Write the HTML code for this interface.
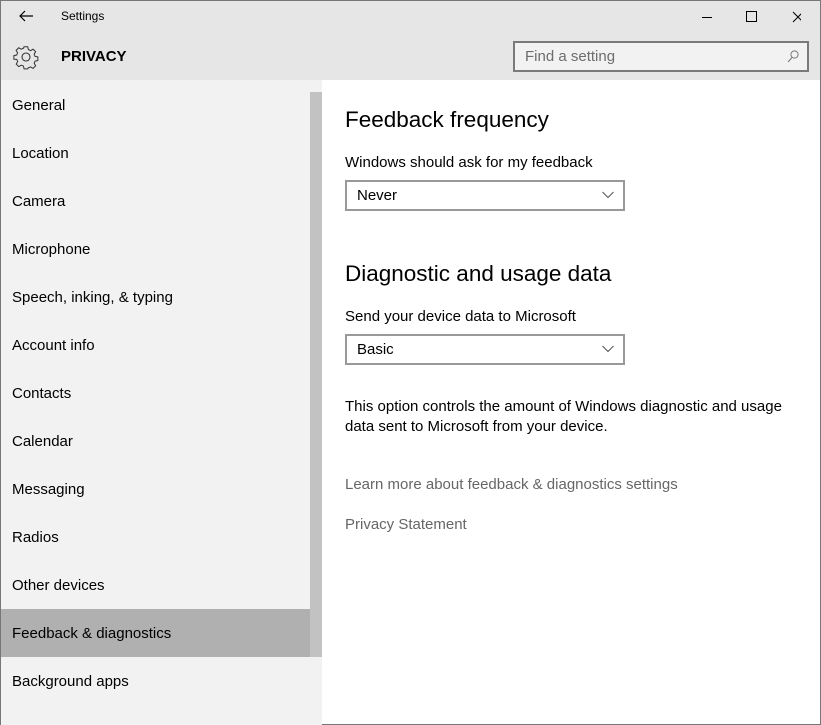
<!DOCTYPE html><html><head><style>
*{margin:0;padding:0;box-sizing:border-box}
body{width:821px;height:725px;overflow:hidden;font-family:"Liberation Sans",sans-serif;background:#fff;position:relative}
.win{position:absolute;left:0;top:0;width:821px;height:725px;border:1px solid #777;}
.hdr{position:absolute;left:0;top:0;width:819px;height:79px;background:#e6e6e6}
.t{position:absolute;font-size:12px;color:#000}
.side{position:absolute;left:0;top:79px;width:321px;height:645px;background:#f2f2f2}
.it{position:absolute;left:0;width:309px;height:48px;line-height:50px;padding-left:11px;font-size:15px;color:#000}
.sel{background:#b0b0b0}
.sb{position:absolute;left:309px;top:12px;width:12px;height:565px;background:#c2c2c2}
.c{position:absolute;color:#000}
.dd{position:absolute;left:344px;width:280px;height:31px;border:2px solid #999;font-size:15px;line-height:27px;padding-left:10px}
.dd svg{position:absolute;right:9px;top:9px}
</style></head><body><div class="win">
<div class="hdr">
<svg style="position:absolute;left:17px;top:8px" width="16" height="14" viewBox="0 0 16 14"><path d="M15 7H2M7 2L2 7l5 5" fill="none" stroke="#000" stroke-width="1.2"/></svg>
<div class="t" style="left:60px;top:8px">Settings</div>
<svg style="position:absolute;left:700px;top:10px" width="100" height="12"><path d="M1 6.5h10" stroke="#000"/><rect x="45.5" y="0.5" width="10" height="10" fill="none" stroke="#000"/><path d="M92 1l10 10M102 1l-10 10" stroke="#000"/></svg>
<svg style="position:absolute;left:12px;top:43px" width="26" height="26" viewBox="0 0 26 26"><g fill="none" stroke="#333" stroke-width="1.1"><circle cx="13" cy="13" r="4"/><path d="M11 2h4l.7 3 2.4 1.2 2.7-1.6 2.8 2.8-1.6 2.7L23 12.5l3 .5v4l-3 .6-1 2.4 1.6 2.7-2.8 2.8-2.7-1.6-2.4 1L15 26h-4l-.6-3-2.4-1-2.7 1.6-2.8-2.8 1.6-2.7-1-2.4L0 15.6v-4l3-.6 1-2.4-1.6-2.7 2.8-2.8L7.9 4.7 10.4 3.6z" transform="scale(.92) translate(1 1)"/></g></svg>
<div class="c" style="left:60px;top:47px;font-size:15px;font-weight:bold">PRIVACY</div>
<div style="position:absolute;left:512px;top:40px;width:296px;height:31px;border:2px solid #7a7a7a;background:#f2f2f2;font-size:15px;color:#6d6d6d;line-height:27px;padding-left:10px">Find a setting
<svg style="position:absolute;right:8px;top:7px" width="12" height="13"><circle cx="7.5" cy="4.5" r="3.6" fill="none" stroke="#777"/><path d="M5 7.5L1 12" stroke="#777"/></svg></div>
</div>
<div class="side">
<div class="it" style="top:1px">General</div>
<div class="it" style="top:49px">Location</div>
<div class="it" style="top:97px">Camera</div>
<div class="it" style="top:145px">Microphone</div>
<div class="it" style="top:193px">Speech, inking, &amp; typing</div>
<div class="it" style="top:241px">Account info</div>
<div class="it" style="top:289px">Contacts</div>
<div class="it" style="top:337px">Calendar</div>
<div class="it" style="top:385px">Messaging</div>
<div class="it" style="top:433px">Radios</div>
<div class="it" style="top:481px">Other devices</div>
<div class="it sel" style="top:529px">Feedback &amp; diagnostics</div>
<div class="it" style="top:577px">Background apps</div>
<div class="sb"></div>
</div>
<div class="c" style="left:344px;top:106px;font-size:22.5px">Feedback frequency</div>
<div class="c" style="left:344px;top:153px;font-size:15px">Windows should ask for my feedback</div>
<div class="dd" style="top:179px">Never<svg width="12" height="8"><path d="M.5 1l5.5 5.5L11.5 1" fill="none" stroke="#555"/></svg></div>
<div class="c" style="left:344px;top:260px;font-size:22.5px">Diagnostic and usage data</div>
<div class="c" style="left:344px;top:307px;font-size:15px">Send your device data to Microsoft</div>
<div class="dd" style="top:333px">Basic<svg width="12" height="8"><path d="M.5 1l5.5 5.5L11.5 1" fill="none" stroke="#555"/></svg></div>
<div class="c" style="left:344px;top:396px;font-size:15px;line-height:20px">This option controls the amount of Windows diagnostic and usage<br>data sent to Microsoft from your device.</div>
<div class="c" style="left:344px;top:475px;font-size:15px;color:#666">Learn more about feedback &amp; diagnostics settings</div>
<div class="c" style="left:344px;top:515px;font-size:15px;color:#666">Privacy Statement</div>
</div></body></html>
